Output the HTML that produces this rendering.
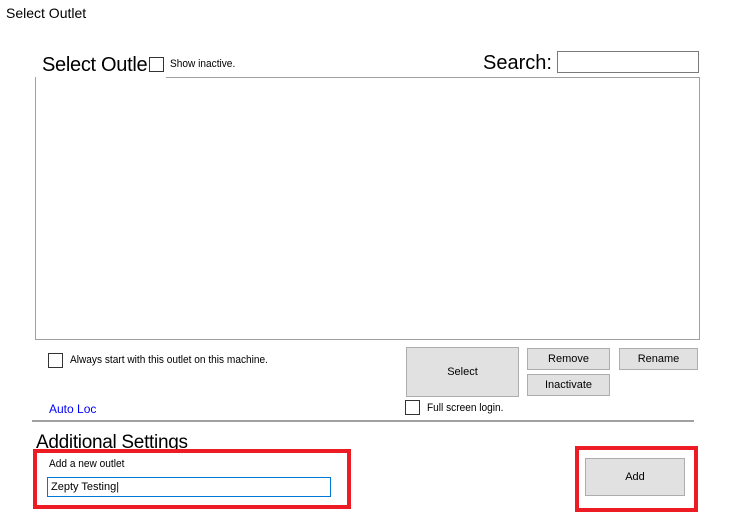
<!DOCTYPE html>
<html><head><style>
body{margin:0;width:737px;height:519px;background:#fff;position:relative;overflow:hidden;font-family:"Liberation Sans",sans-serif;color:#000}
.a{position:absolute}
.s{font-size:11px;transform:scaleX(.92);transform-origin:left}
.btn{position:absolute;background:#e1e1e1;border:1px solid #adadad;box-sizing:border-box;font-size:11px;display:flex;align-items:center;justify-content:center}
.cb{position:absolute;width:13px;height:13px;border:1px solid #333;box-sizing:border-box;background:#fff}
</style></head><body>
<div class="a" style="left:6px;top:5px;font-size:14px">Select Outlet</div>
<div class="a" style="left:35px;top:77px;width:665px;height:263px;border:1px solid #a0a0a0;box-sizing:border-box"></div>
<div class="a" style="left:36px;top:72px;width:130px;height:8px;background:#fff"></div>
<div class="a" style="left:42px;top:54px;font-size:20px;letter-spacing:-0.3px">Select Outle</div>
<div class="cb" style="left:149px;top:57px;width:15px;height:15px"></div>
<div class="a s" style="left:170px;top:58px">Show inactive.</div>
<div class="a" style="left:483px;top:52px;font-size:20px">Search:</div>
<div class="a" style="left:557px;top:51px;width:142px;height:22px;border:1px solid #7a7a7a;box-sizing:border-box"></div>
<div class="cb" style="left:48px;top:353px;width:15px;height:15px"></div>
<div class="a s" style="left:70px;top:354px">Always start with this outlet on this machine.</div>
<div class="btn" style="left:406px;top:347px;width:113px;height:50px">Select</div>
<div class="btn" style="left:527px;top:348px;width:83px;height:22px">Remove</div>
<div class="btn" style="left:527px;top:374px;width:83px;height:22px">Inactivate</div>
<div class="btn" style="left:619px;top:348px;width:79px;height:22px">Rename</div>
<div class="a" style="left:49px;top:402px;font-size:12px;line-height:14px;color:#0000ff;height:11px;overflow:hidden">Auto Loc</div>
<div class="cb" style="left:405px;top:400px;width:15px;height:15px"></div>
<div class="a s" style="left:427px;top:402px">Full screen login.</div>
<div class="a" style="left:32px;top:420px;width:662px;height:2px;background:#a0a0a0"></div>
<div class="a" style="left:36px;top:432px;font-size:19px;letter-spacing:-0.3px">Additional Settings</div>
<div class="a" style="left:33px;top:449px;width:318px;height:60px;border:4px solid #ed1c24;box-sizing:border-box"></div>
<div class="a s" style="left:49px;top:458px">Add a new outlet</div>
<div class="a" style="left:47px;top:477px;width:284px;height:20px;border:1px solid #0078d7;box-sizing:border-box;background:#fff;font-size:11px;padding:3px 0 0 3px">Zepty Testing|</div>
<div class="a" style="left:575px;top:446px;width:123px;height:66px;border:4px solid #ed1c24;box-sizing:border-box"></div>
<div class="btn" style="left:585px;top:458px;width:100px;height:38px">Add</div>
</body></html>
